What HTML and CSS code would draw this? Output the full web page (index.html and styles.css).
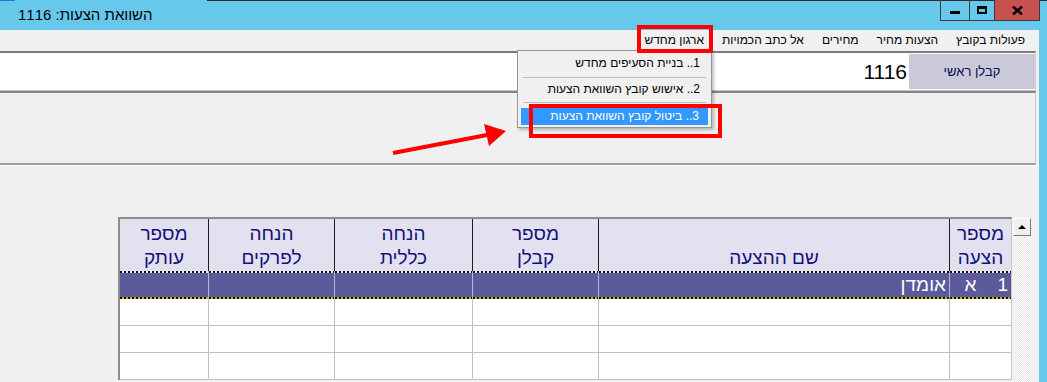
FILE: index.html
```html
<!DOCTYPE html>
<html lang="he">

<head>
    <meta charset="UTF-8">
    <meta name="viewport" content="width=device-width, initial-scale=1.0">
    <title>השוואת הצעות</title>
    <link rel="stylesheet" href="styles.css">
</head>

<body>
    <div class="window">
        <div class="titlebar">
            <span class="title" dir="rtl">השוואת הצעות: 1116</span>
            <div class="win-buttons">
                <span class="win-btn min"><i class="min-bar"></i></span>
                <span class="win-btn max"><i class="max-box"></i></span>
                <span class="win-btn close">
                    <svg width="11" height="9" viewBox="0 0 11 9">
                        <path d="M1 0.5 L10 8.5 M10 0.5 L1 8.5" stroke="#000" stroke-width="2.4" fill="none" />
                    </svg>
                </span>
            </div>
        </div>

        <div class="frame">
            <div class="client">
                <ul class="menubar" dir="rtl">
                    <li>פעולות בקובץ</li>
                    <li>הצעות מחיר</li>
                    <li>מחירים</li>
                    <li>אל כתב הכמויות</li>
                    <li>ארגון מחדש</li>
                </ul>

                <div class="top-panel" dir="rtl">
                    <div class="contractor-label">קבלן ראשי</div>
                    <div class="contractor-no">1116</div>
                </div>

                <div class="info-area"></div>

                <div class="grid-area">
                    <table class="grid" dir="rtl">
                        <colgroup>
                            <col style="width: 62px">
                            <col style="width: 351px">
                            <col style="width: 126px">
                            <col style="width: 138px">
                            <col style="width: 126px">
                            <col style="width: 88px">
                        </colgroup>
                        <thead>
                            <tr>
                                <th>מספר<br>הצעה</th>
                                <th>שם ההצעה</th>
                                <th>מספר<br>קבלן</th>
                                <th>הנחה<br>כללית</th>
                                <th>הנחה<br>לפרקים</th>
                                <th>מספר<br>עותק</th>
                            </tr>
                        </thead>
                        <tbody>
                            <tr class="selected">
                                <td class="num">1    א</td>
                                <td>אומדן</td>
                                <td></td>
                                <td></td>
                                <td></td>
                                <td></td>
                            </tr>
                            <tr>
                                <td></td><td></td><td></td><td></td><td></td><td></td>
                            </tr>
                            <tr>
                                <td></td><td></td><td></td><td></td><td></td><td></td>
                            </tr>
                            <tr>
                                <td></td><td></td><td></td><td></td><td></td><td></td>
                            </tr>
                        </tbody>
                    </table>
                    <div class="scrollbar">
                        <span class="scroll-up"></span>
                    </div>
                </div>
            </div>
        </div>

        <!-- open menu of "ארגון מחדש" -->
        <ul class="dropdown" dir="rtl">
            <li class="dd-item">1.. בניית הסעיפים מחדש</li>
            <li class="dd-sep"></li>
            <li class="dd-item">2.. אישוש קובץ השוואת הצעות</li>
            <li class="dd-sep last"></li>
            <li class="dd-item active">3.. ביטול קובץ השוואת הצעות</li>
        </ul>

        <!-- annotations -->
        <div class="mark mark-menu"></div>
        <div class="mark mark-item"></div>
        <svg class="arrow" width="120" height="40" viewBox="0 0 120 40">
            <line x1="3" y1="35" x2="97" y2="17" stroke="#f00" stroke-width="4" />
            <polygon points="116,13 94,6 99,28" fill="#f00" />
        </svg>
    </div>
</body>

</html>
```

FILE: styles.css
```css
* {
    box-sizing: border-box;
}

body {
    margin: 0;
    width: 1047px;
    height: 382px;
    overflow: hidden;
    font-family: "Liberation Sans", "DejaVu Sans", sans-serif;
    background-color: #66c8eb;
}

.window {
    position: relative;
    height: 382px;
    overflow: hidden;
}

/* title bar */
.titlebar {
    height: 30px;
    display: flex;
    justify-content: space-between;
    align-items: flex-start;
    background:
        linear-gradient(to right, #1e7fd0 15px, #66c8eb 15px, #66c8eb 207px, #2e2e2e 207px) top / 100% 1px no-repeat,
        #66c8eb;
}

.title {
    padding: 6px 0 0 18px;
    font-size: 15px;
    line-height: 18px;
    color: #000;
}

.win-buttons {
    display: flex;
    height: 21px;
    margin-right: 7px;
    border: 1px solid #3a3a3a;
    border-top: none;
}

.win-btn {
    display: flex;
    align-items: center;
    justify-content: center;
    height: 20px;
}

.win-btn + .win-btn {
    border-left: 1px solid #3a3a3a;
}

.min {
    width: 28px;
    align-items: flex-end;
    padding-bottom: 6px;
}

.max {
    width: 25px;
}

.close {
    width: 45px;
    background-color: #c75050;
}

.min-bar {
    display: block;
    width: 10px;
    height: 3px;
    background-color: #000;
}

.max-box {
    display: block;
    width: 10px;
    height: 8px;
    border: 2px solid #000;
    border-top-width: 3px;
}

/* window body */
.frame {
    height: 352px;
    display: flex;
    overflow: hidden;
}

.client {
    width: 1039px;
    background-color: #f0f0f0;
    overflow: hidden;
}

.menubar {
    display: flex;
    height: 21px;
    margin: 0;
    padding: 0 5px 0 0;
    list-style: none;
    font-size: 12px;
    line-height: 21px;
    color: #000;
}

.menubar li {
    padding: 0 9px;
}

.top-panel {
    display: flex;
    height: 40px;
    margin-right: 3px;
    padding: 1px 0;
    background-color: #fff;
    border-top: 2px solid #7d7d7d;
    border-bottom: 1px solid #c4c4c4;
    border-right: 1px solid #d0d0d0;
}

.contractor-label {
    width: 126px;
    height: 35px;
    line-height: 35px;
    text-align: center;
    font-size: 13px;
    color: #0a0a4e;
    background-color: #c9c9da;
}

.contractor-no {
    padding-right: 2px;
    font-size: 21px;
    line-height: 35px;
    color: #000;
}

.info-area {
    height: 74px;
    margin-right: 3px;
    border-top: 2px solid #858585;
    border-bottom: 2px solid #a0a0a0;
    border-right: 1px solid #c8c8c8;
}

.grid-area {
    display: flex;
    align-items: flex-start;
    padding: 51px 0 0 118px;
    border-top: 1px solid #fff;
}

/* grid */
.grid {
    width: 894px;
    table-layout: fixed;
    border-collapse: separate;
    border-spacing: 0;
    border-top: 2px solid #8c8c8c;
    border-left: 2px solid #8c8c8c;
    border-right: 1px solid #c8c8c8;
    font-size: 19px;
}

.grid th {
    height: 52px;
    padding: 0 2px 1px;
    vertical-align: bottom;
    font-weight: normal;
    line-height: 24px;
    color: #12127a;
    background-color: #e3e1f0;
    border-left: 1px solid #1c1c1c;
}

.grid td {
    height: 27px;
    padding: 0 3px;
    background-color: #fff;
    border-left: 1px solid #c0c0c0;
    border-bottom: 1px solid #c0c0c0;
}

.grid th:last-child,
.grid td:last-child {
    border-left: none;
}

.grid .selected td {
    height: 28px;
    border-bottom: none;
    border-left-color: #b8b8cc;
    color: #fff;
    line-height: 24px;
    background:
        repeating-linear-gradient(90deg, #111 0 2px, #eee 2px 4px) top / 100% 2px no-repeat,
        repeating-linear-gradient(90deg, #111 0 2px, #c8b200 2px 4px) bottom / 100% 2px no-repeat,
        #5b5a9b;
}

.grid .num {
    white-space: pre;
}

.scrollbar {
    width: 20px;
    height: 165px;
    padding: 1px 0 0 1px;
    background: repeating-conic-gradient(#fdfdfd 0 25%, #e6e6e6 0 50%) 0 0 / 2px 2px;
}

.scroll-up {
    display: flex;
    align-items: center;
    justify-content: center;
    width: 18px;
    height: 18px;
    background-color: #f0f0f0;
    border: 1px solid;
    border-color: #fff #7a7a7a #7a7a7a #fff;
}

.scroll-up::before {
    content: "";
    border-left: 4px solid transparent;
    border-right: 4px solid transparent;
    border-bottom: 4px solid #000;
}

/* open menu */
.dropdown {
    position: absolute;
    left: 517px;
    top: 50px;
    width: 195px;
    margin: 0;
    padding: 1px 2px 2px;
    list-style: none;
    background-color: #f0f0f0;
    border: 1px solid #979797;
    box-shadow: 2px 2px 3px rgba(0, 0, 0, 0.25);
    font-size: 12px;
    color: #000;
}

.dd-item {
    height: 22px;
    line-height: 22px;
    padding-right: 9px;
}

.dd-sep {
    height: 1px;
    margin: 3px 3px 0;
    background-color: #bdbdbd;
}

.dd-sep.last {
    margin: 2px 3px 5px;
}

.dd-item.active {
    height: 17px;
    line-height: 17px;
    margin: 0 1px;
    color: #fff;
    background-color: #3399ff;
}

/* red annotations */
.mark {
    position: absolute;
    border: 4px solid #f00;
}

.mark-menu {
    left: 637px;
    top: 25px;
    width: 76px;
    height: 28px;
}

.mark-item {
    left: 529px;
    top: 104px;
    width: 193px;
    height: 34px;
}

.arrow {
    position: absolute;
    left: 390px;
    top: 118px;
}
```
